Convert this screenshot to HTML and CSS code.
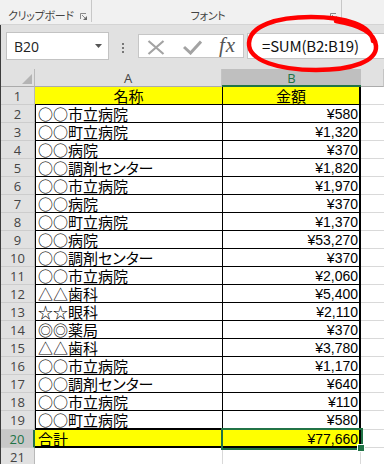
FILE: index.html
```html
<!DOCTYPE html>
<html lang="ja">
<head>
<meta charset="utf-8">
<title>Excel SUM</title>
<link rel="stylesheet" href="styles.css">
</head>
<body>
<div class="app">
  <div class="ribbon">
    <div class="group g-clip">
      <span class="label">クリップボード</span>
      <svg class="launcher" viewBox="0 0 7 7"><path d="M0.5 6 V0.5 H6" fill="none" stroke="#8a8a8a" stroke-width="1"/><path d="M2 2 L5.5 5.5" stroke="#8a8a8a" stroke-width="1"/><path d="M7 3 V7 H3 Z" fill="#6a6a6a"/></svg>
    </div>
    <div class="group g-font">
      <span class="label">フォント</span>
      <svg class="launcher" viewBox="0 0 7 7"><path d="M0.5 6 V0.5 H6" fill="none" stroke="#8a8a8a" stroke-width="1"/><path d="M2 2 L5.5 5.5" stroke="#8a8a8a" stroke-width="1"/><path d="M7 3 V7 H3 Z" fill="#6a6a6a"/></svg>
    </div>
    <div class="group g-rest"></div>
  </div>
  <div class="main">
    <div class="fbar">
      <div class="namebox"><span>B20</span><svg class="arrow" width="7" height="4" viewBox="0 0 7 4"><path d="M0 0 H7 L3.5 4 Z" fill="#555"/></svg></div>
      <div class="grip"><i></i><i></i><i></i></div>
      <div class="fbuttons">
        <svg class="icon-x" width="18" height="15" viewBox="0 0 18 15"><path d="M1.5 1 L16.5 14 M16.5 1 L1.5 14" stroke="#a3a3a3" stroke-width="2.2" fill="none"/></svg>
        <svg class="icon-check" width="19" height="15" viewBox="0 0 19 15"><path d="M1 7 L7.5 13 L18 1.5" stroke="#a3a3a3" stroke-width="3" fill="none"/></svg>
        <span class="fx">fx</span>
      </div>
      <div class="finput">=SUM(B2:B19)</div>
    </div>
    <div class="sheet">
      <div class="corner"><svg width="10" height="10" viewBox="0 0 10 10"><path d="M10 0 V10 H0 Z" fill="#b4b4b4"/></svg></div>
      <div class="ch">A</div>
      <div class="ch sel">B</div>
      <div class="ch"></div>

      <div class="rh">1</div><div class="a hdr">名称</div><div class="b hdr">金額</div><div class="c"></div>
      <div class="rh">2</div><div class="a">○○市立病院</div><div class="b">¥580</div><div class="c"></div>
      <div class="rh">3</div><div class="a">○○町立病院</div><div class="b">¥1,320</div><div class="c"></div>
      <div class="rh">4</div><div class="a">○○病院</div><div class="b">¥370</div><div class="c"></div>
      <div class="rh">5</div><div class="a">○○調剤<span class="kana">センター</span></div><div class="b">¥1,820</div><div class="c"></div>
      <div class="rh">6</div><div class="a">○○市立病院</div><div class="b">¥1,970</div><div class="c"></div>
      <div class="rh">7</div><div class="a">○○病院</div><div class="b">¥370</div><div class="c"></div>
      <div class="rh">8</div><div class="a">○○町立病院</div><div class="b">¥1,370</div><div class="c"></div>
      <div class="rh">9</div><div class="a">○○病院</div><div class="b">¥53,270</div><div class="c"></div>
      <div class="rh">10</div><div class="a">○○調剤<span class="kana">センター</span></div><div class="b">¥370</div><div class="c"></div>
      <div class="rh">11</div><div class="a">○○市立病院</div><div class="b">¥2,060</div><div class="c"></div>
      <div class="rh">12</div><div class="a">△△歯科</div><div class="b">¥5,400</div><div class="c"></div>
      <div class="rh">13</div><div class="a">☆☆眼科</div><div class="b">¥2,110</div><div class="c"></div>
      <div class="rh">14</div><div class="a">◎◎薬局</div><div class="b">¥370</div><div class="c"></div>
      <div class="rh">15</div><div class="a">△△歯科</div><div class="b">¥3,780</div><div class="c"></div>
      <div class="rh">16</div><div class="a">○○市立病院</div><div class="b">¥1,170</div><div class="c"></div>
      <div class="rh">17</div><div class="a">○○調剤<span class="kana">センター</span></div><div class="b">¥640</div><div class="c"></div>
      <div class="rh">18</div><div class="a">○○市立病院</div><div class="b">¥110</div><div class="c"></div>
      <div class="rh">19</div><div class="a r19">○○町立病院</div><div class="b r19">¥580</div><div class="c"></div>
      <div class="rh sel">20</div><div class="a total">合計</div><div class="b total">¥77,660</div><div class="c"></div>
      <div class="rh">21</div><div class="a empty"></div><div class="b empty"></div><div class="c"></div>
    </div>
  </div>
  <div class="selection"><i class="handle"></i></div>
  <svg class="annot" width="384" height="80" viewBox="0 0 384 80"><path d="M373 41 C371 25 346 17 311 17 C276 17 250 26 249 43 C248 61 280 70 316 70 C353 70 377 61 376 46 C375 33 360 25 336 21" fill="none" stroke="#ff0000" stroke-width="4.5" stroke-linecap="round"/></svg>
</div>
</body>
</html>
```
FILE: styles.css
```css
* { box-sizing: border-box; }
html, body { margin: 0; padding: 0; }
body {
  width: 384px;
  height: 464px;
  overflow: hidden;
  background: #fff;
  font-family: "Noto Sans CJK JP", sans-serif;
}
.app { position: relative; width: 384px; height: 464px; overflow: hidden; }

/* ribbon */
.ribbon {
  display: flex;
  height: 25px;
  background: #f1f1f1;
  border-bottom: 1px solid #d4d4d4;
}
.group {
  display: flex;
  align-items: flex-start;
  height: 22px;
  padding-top: 8px;
  border-right: 1px solid #c8c8c8;
}
.g-clip { width: 92px; padding-left: 8px; padding-right: 4px; }
.g-font { width: 250px; padding-right: 4px; }
.g-rest { flex: 1; border-right: none; }
.label {
  font-size: 11px;
  line-height: 14px;
  color: #444;
  font-feature-settings: "palt";
  letter-spacing: -0.3px;
  white-space: nowrap;
}
.g-font .label { flex: 1; text-align: center; padding-right: 6px; }
.launcher { display: block; margin-left: auto; margin-top: 5px; width: 7px; height: 7px; }

/* formula bar */
.main { border-left: 1px solid #3c3c3c; }
.fbar {
  display: flex;
  align-items: flex-start;
  height: 44px;
  background: #e1e1e1;
  padding-top: 7px;
  padding-left: 5px;
}
.namebox {
  display: flex;
  align-items: center;
  width: 103px;
  height: 28px;
  background: #fff;
  border: 1px solid #c3c3c3;
  padding: 0 6px 0 7px;
  font-family: "Open Sans", sans-serif;
  font-size: 14px;
  color: #222;
}
.namebox .arrow { margin-left: auto; }
.grip { display: flex; flex-direction: column; gap: 2px; margin: 11px 0 0 13px; }
.grip i { display: block; width: 2px; height: 2px; background: #777; }
.fbuttons {
  display: flex;
  align-items: flex-start;
  width: 106px;
  height: 24px;
  margin: 2px 0 0 14px;
  padding: 5px 0 0 8px;
  background: #fff;
  border: 1px solid #c6c6c6;
}
.icon-x, .icon-check { display: block; }
.icon-check { margin-left: 18px; }
.fx {
  margin-left: 17px;
  margin-top: -5px;
  font-family: "Liberation Serif", serif;
  font-style: italic;
  font-size: 21px;
  line-height: 20px;
  letter-spacing: 1px;
  color: #555;
}
.finput {
  flex: 1;
  height: 26px;
  margin: 1px 0 0 3px;
  padding-left: 14px;
  background: #fff;
  border: 1px solid #c6c6c6;
  border-right: none;
  font-size: 15px;
  line-height: 24px;
  letter-spacing: -0.2px;
  color: #111;
  white-space: nowrap;
}

/* sheet */
.sheet {
  display: grid;
  grid-template-columns: 34px 187px 139px 1fr;
  grid-template-rows: 18px repeat(18, 18px) 19px 18px 18px;
}
.corner {
  display: flex;
  justify-content: flex-end;
  align-items: flex-end;
  padding: 0 2px 2px 0;
  background: #e1e1e1;
  border-right: 1px solid #b9b9b9;
  border-bottom: 1px solid #ababab;
}
.ch {
  background: #e1e1e1;
  border-right: 1px solid #c4c4c4;
  border-bottom: 1px solid #ababab;
  font-family: "Open Sans", sans-serif;
  font-size: 13px;
  line-height: 17px;
  padding-top: 1px;
  color: #444;
  text-align: center;
}
.ch.sel {
  background: #bfbfbf;
  color: #217346;
  border-right: none;
  border-bottom: 2px solid #217346;
}
.rh {
  background: #e1e1e1;
  border-right: 1px solid #b9b9b9;
  border-bottom: 1px solid #cdcdcd;
  font-family: "Open Sans", sans-serif;
  font-size: 13px;
  line-height: 17px;
  padding-top: 1px;
  color: #444;
  text-align: center;
}
.rh.sel {
  background: #c8c8c8;
  color: #217346;
  border-right: 2px solid #217346;
}
.a, .b {
  font-size: 15px;
  line-height: 17px;
  color: #000;
  white-space: nowrap;
  border-bottom: 1px solid #000;
}
.a { border-left: 1px solid #000; padding-left: 2px; }
.b {
  font-family: "Liberation Sans", "Noto Sans CJK JP", sans-serif;
  font-size: 14px;
  padding-top: 1px;
  border-left: 1px solid #000;
  border-right: 2px solid #000;
  padding-right: 1px;
  text-align: right;
}
.kana { font-feature-settings: "palt"; }
.hdr { background: #ffff00; text-align: center; padding-right: 0; }
.a.hdr { border-left: none; padding-left: 0; }
.b.hdr { font-family: "Noto Sans CJK JP", sans-serif; font-size: 15px; padding-top: 0; }
.r19 { border-bottom-width: 2px; }
.total { background: #ffff00; border-bottom-width: 2px; }
.a.total { border-left: none; padding-left: 3px; }
.a.empty { border-left: none; border-bottom-color: #d9d9d9; }
.b.empty { border-left-color: #d9d9d9; border-right: 1px solid #d9d9d9; border-bottom-color: #d9d9d9; }
.c { border-bottom: 1px solid #d9d9d9; }

/* overlays */
.selection {
  position: absolute;
  left: 221px;
  top: 428px;
  width: 142px;
  height: 22px;
  border: 2px solid #217346;
}
.handle {
  position: absolute;
  left: 134px;
  top: 14px;
  width: 8px;
  height: 8px;
  background: #217346;
  border: 1px solid #fff;
}
.annot { position: absolute; left: 0; top: 0; pointer-events: none; }
```
